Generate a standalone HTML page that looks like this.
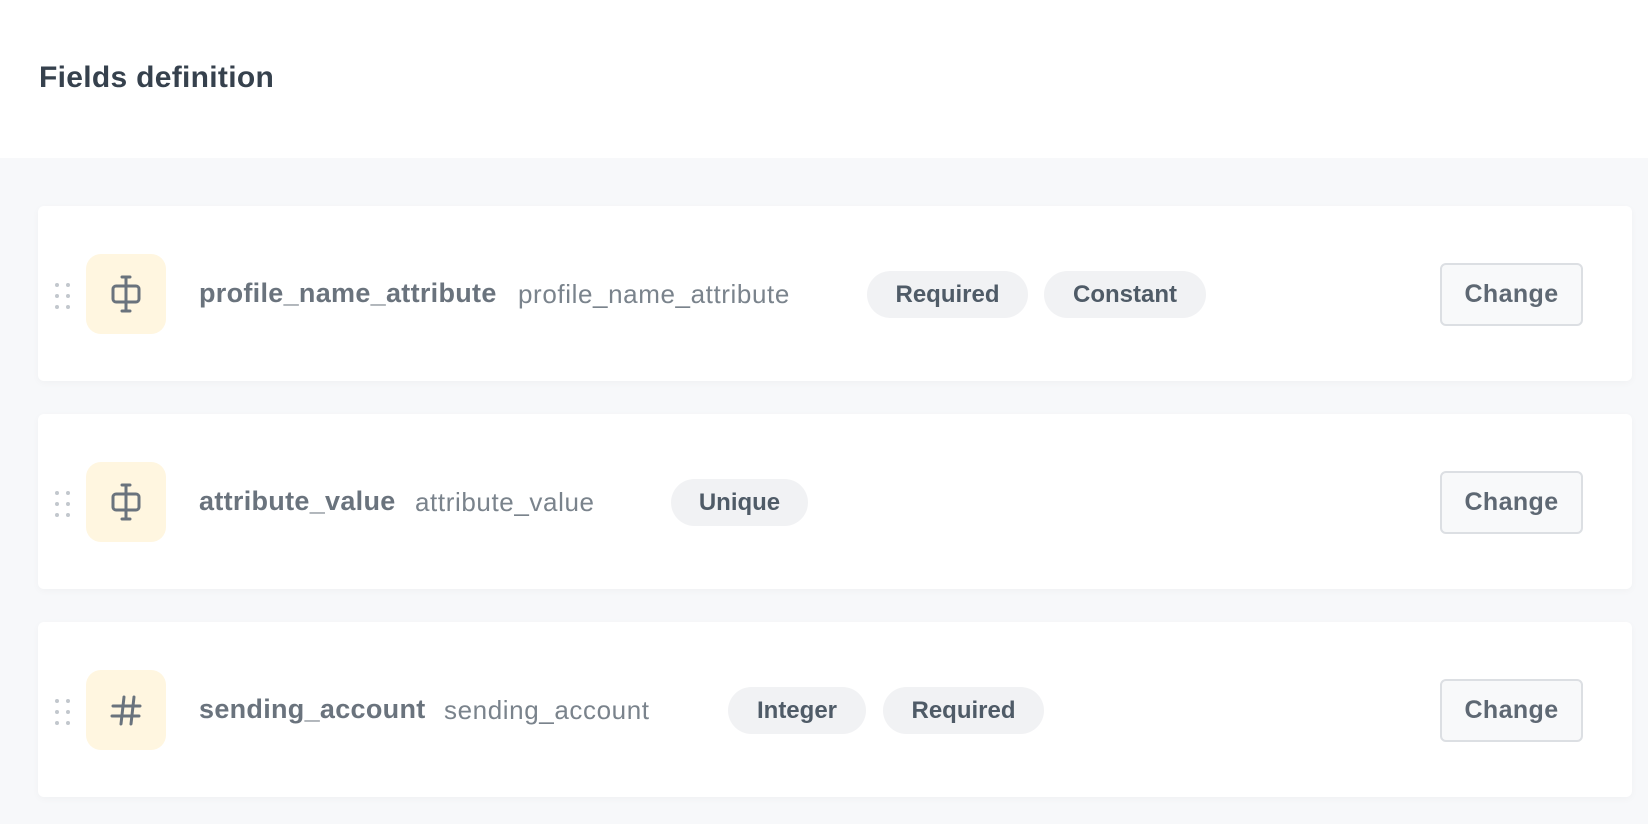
<!DOCTYPE html>
<html><head><style>
body{margin:0;width:1648px;height:824px;background:#f7f8fa;font-family:"Liberation Sans",sans-serif;position:relative;overflow:hidden}
.hdr{position:absolute;left:0;top:0;width:1648px;height:158px;background:#fff}
.hdr h1{position:absolute;left:39px;top:61px;margin:0;font-size:30px;font-weight:600;color:#36414d;letter-spacing:0.3px}
.card{position:absolute;left:38px;width:1594px;height:175px;background:#fff;border-radius:6px;box-shadow:0 2px 8px rgba(0,0,0,0.03)}
.dots{position:absolute;left:17px;top:77px;width:14px;height:26px}
.dots i{position:absolute;width:4px;height:4px;border-radius:50%;background:#c2c7cd}
.ic{position:absolute;left:48px;top:48px;width:80px;height:80px;border-radius:15px;background:#fff6e0}
.name{position:absolute;left:161px;top:72px;font-size:27px;font-weight:700;color:#6a737d;letter-spacing:0.3px}
.sec{position:absolute;top:73px;font-size:26px;color:#7a838c;letter-spacing:0.6px}
.tag{position:absolute;top:65px;height:47px;border-radius:24px;background:#f1f2f4;color:#4f5b67;font-size:24px;font-weight:700;line-height:47px;text-align:center}
.btn{position:absolute;left:1402px;top:57px;width:143px;height:63px;box-sizing:border-box;border:2px solid #dcdfe3;border-radius:6px;background:#f8f9fa;color:#5e6873;font-size:25px;font-weight:600;line-height:59px;text-align:center;letter-spacing:0.4px}
</style></head><body>
<div class="hdr"><h1>Fields definition</h1></div>

<div class="card" style="top:206px">
<div class="dots"><i style="left:0;top:0"></i><i style="left:11px;top:0"></i><i style="left:0;top:11px"></i><i style="left:11px;top:11px"></i><i style="left:0;top:22px"></i><i style="left:11px;top:22px"></i></div>
<div class="ic"><svg width="80" height="80" viewBox="0 0 80 80"><g fill="none" stroke="#6a737d" stroke-width="3" stroke-linecap="round"><path d="M40 23V57M36 23H44M36 57H44"/><rect x="27" y="32" width="26" height="16" rx="3"/></g></svg></div>
<div class="name">profile_name_attribute</div><div class="sec" style="left:480px">profile_name_attribute</div>
<div class="tag" style="left:829px;width:161px">Required</div>
<div class="tag" style="left:1006px;width:162px">Constant</div>
<div class="btn">Change</div>
</div>

<div class="card" style="top:414px">
<div class="dots"><i style="left:0;top:0"></i><i style="left:11px;top:0"></i><i style="left:0;top:11px"></i><i style="left:11px;top:11px"></i><i style="left:0;top:22px"></i><i style="left:11px;top:22px"></i></div>
<div class="ic"><svg width="80" height="80" viewBox="0 0 80 80"><g fill="none" stroke="#6a737d" stroke-width="3" stroke-linecap="round"><path d="M40 23V57M36 23H44M36 57H44"/><rect x="27" y="32" width="26" height="16" rx="3"/></g></svg></div>
<div class="name">attribute_value</div><div class="sec" style="left:377px">attribute_value</div>
<div class="tag" style="left:633px;width:137px">Unique</div>
<div class="btn">Change</div>
</div>

<div class="card" style="top:622px">
<div class="dots"><i style="left:0;top:0"></i><i style="left:11px;top:0"></i><i style="left:0;top:11px"></i><i style="left:11px;top:11px"></i><i style="left:0;top:22px"></i><i style="left:11px;top:22px"></i></div>
<div class="ic"><svg width="80" height="80" viewBox="0 0 80 80"><g fill="none" stroke="#6a737d" stroke-width="3" stroke-linecap="round"><path d="M38 27L35 54M48 27L45 54M27 36H54M26 46H53"/></g></svg></div>
<div class="name">sending_account</div><div class="sec" style="left:406px">sending_account</div>
<div class="tag" style="left:690px;width:138px">Integer</div>
<div class="tag" style="left:845px;width:161px">Required</div>
<div class="btn">Change</div>
</div>
</body></html>
